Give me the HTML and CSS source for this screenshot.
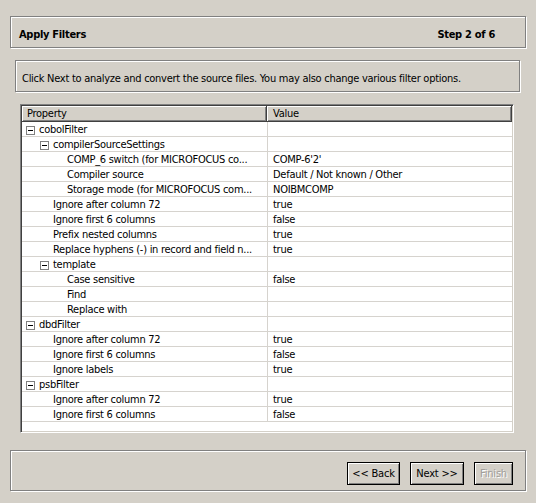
FILE: index.html
```html
<!DOCTYPE html>
<html>
<head>
<meta charset="utf-8">
<link rel="stylesheet" href="styles.css">
</head>
<body>
<div class="wizard">
  <div class="panel head-panel">
    <span class="title">Apply Filters</span>
    <span class="title">Step 2 of 6</span>
  </div>
  <div class="panel desc-panel">Click Next to analyze and convert the source files. You may also change various filter options.</div>
  <div class="grid">
    <div class="thead">
      <div class="th th-prop">Property</div>
      <div class="th th-val">Value</div>
    </div>
    <div class="tbody">
      <div class="row"><div class="prop l0"><span class="box"></span>cobolFilter</div><div class="val"></div></div>
      <div class="row"><div class="prop l1"><span class="box"></span>compilerSourceSettings</div><div class="val"></div></div>
      <div class="row"><div class="prop l2"><span class="slot"></span>COMP_6 switch (for MICROFOCUS co...</div><div class="val">COMP-6'2'</div></div>
      <div class="row"><div class="prop l2"><span class="slot"></span>Compiler source</div><div class="val">Default / Not known / Other</div></div>
      <div class="row"><div class="prop l2"><span class="slot"></span>Storage mode (for MICROFOCUS com...</div><div class="val">NOIBMCOMP</div></div>
      <div class="row"><div class="prop l1"><span class="slot"></span>Ignore after column 72</div><div class="val">true</div></div>
      <div class="row"><div class="prop l1"><span class="slot"></span>Ignore first 6 columns</div><div class="val">false</div></div>
      <div class="row"><div class="prop l1"><span class="slot"></span>Prefix nested columns</div><div class="val">true</div></div>
      <div class="row"><div class="prop l1"><span class="slot"></span>Replace hyphens (-) in record and field n...</div><div class="val">true</div></div>
      <div class="row"><div class="prop l1"><span class="box"></span>template</div><div class="val"></div></div>
      <div class="row"><div class="prop l2"><span class="slot"></span>Case sensitive</div><div class="val">false</div></div>
      <div class="row"><div class="prop l2"><span class="slot"></span>Find</div><div class="val"></div></div>
      <div class="row"><div class="prop l2"><span class="slot"></span>Replace with</div><div class="val"></div></div>
      <div class="row"><div class="prop l0"><span class="box"></span>dbdFilter</div><div class="val"></div></div>
      <div class="row"><div class="prop l1"><span class="slot"></span>Ignore after column 72</div><div class="val">true</div></div>
      <div class="row"><div class="prop l1"><span class="slot"></span>Ignore first 6 columns</div><div class="val">false</div></div>
      <div class="row"><div class="prop l1"><span class="slot"></span>Ignore labels</div><div class="val">true</div></div>
      <div class="row"><div class="prop l0"><span class="box"></span>psbFilter</div><div class="val"></div></div>
      <div class="row"><div class="prop l1"><span class="slot"></span>Ignore after column 72</div><div class="val">true</div></div>
      <div class="row"><div class="prop l1"><span class="slot"></span>Ignore first 6 columns</div><div class="val">false</div></div>
    </div>
  </div>
  <div class="panel foot-panel">
    <button class="btn btn-back">&lt;&lt; Back</button>
    <button class="btn btn-next">Next &gt;&gt;</button>
    <button class="btn btn-finish" disabled>Finish</button>
  </div>
</div>
</body>
</html>
```

FILE: styles.css
```css
html, body {
  margin: 0;
  padding: 0;
  background: #d4d0c8;
}
body {
  font-family: "DejaVu Sans Condensed", "DejaVu Sans", sans-serif;
  font-stretch: condensed;
  font-size: 11px;
  letter-spacing: -0.27px;
  color: #000;
  width: 536px;
  height: 503px;
  overflow: hidden;
}
.wizard {
  display: flex;
  flex-direction: column;
  align-items: flex-start;
  padding-top: 16px;
}
.panel {
  box-sizing: border-box;
  border: 1px solid #808080;
  box-shadow: 1px 1px 0 #fff, inset 1px 1px 0 #fff;
}
.head-panel {
  margin-left: 10px;
  width: 516px;
  height: 32px;
  display: flex;
  justify-content: space-between;
  padding: 11px 30px 0 8px;
  line-height: 14px;
}
.title {
  font-weight: bold;
  letter-spacing: -0.3px;
}
.desc-panel {
  margin-left: 15px;
  margin-top: 12px;
  width: 505px;
  height: 32px;
  padding: 11px 0 0 6px;
  line-height: 14px;
  white-space: nowrap;
}
.grid {
  box-sizing: border-box;
  margin-left: 20px;
  margin-top: 12px;
  width: 494px;
  height: 329px;
  background: #fff;
  border-top: 1px solid #808080;
  border-left: 1px solid #808080;
  border-right: 1px solid #fff;
  border-bottom: 1px solid #fff;
  box-shadow: inset 1px 1px 0 #404040, inset -1px -1px 0 #d4d0c8;
  padding: 1px;
}
.thead {
  display: grid;
  grid-template-columns: 245px 1fr;
  height: 16px;
}
.th {
  box-sizing: border-box;
  background: #d4d0c8;
  padding-top: 1px;
  line-height: 14px;
  border-right: 1px solid #404040;
  border-bottom: 1px solid #404040;
  box-shadow: inset 1px 1px 0 #fff, inset -1px -1px 0 #808080;
  white-space: nowrap;
  overflow: hidden;
}
.th-prop {
  padding-left: 5px;
}
.th-val {
  padding-left: 6px;
}
.row {
  display: grid;
  grid-template-columns: 245px 1fr;
  height: 15px;
  box-sizing: border-box;
  border-bottom: 1px solid #d6d3ce;
}
.prop, .val {
  box-sizing: border-box;
  height: 14px;
  padding-top: 1px;
  line-height: 13px;
  white-space: nowrap;
  overflow: hidden;
  display: flex;
  align-items: flex-start;
}
.val {
  border-left: 1px solid #d6d3ce;
  padding-left: 5px;
}
.l0 { padding-left: 4px; }
.l1 { padding-left: 18px; }
.l2 { padding-left: 32px; }
.slot {
  flex: none;
  width: 13px;
}
.box {
  flex: none;
  position: relative;
  box-sizing: border-box;
  width: 9px;
  height: 9px;
  margin-top: 3px;
  border: 1px solid #808080;
  background: #fff;
  margin-right: 4px;
}
.box::after {
  content: "";
  position: absolute;
  left: 1px;
  top: 3px;
  width: 5px;
  height: 1px;
  background: #000;
}
.foot-panel {
  margin-left: 10px;
  margin-top: 17px;
  width: 516px;
  height: 41px;
  display: flex;
  justify-content: flex-end;
  gap: 10px;
  padding: 11px 12px 0 0;
}
.btn {
  box-sizing: border-box;
  height: 23px;
  padding: 0;
  margin: 0;
  font-family: inherit;
  font-stretch: condensed;
  font-size: 11px;
  letter-spacing: -0.2px;
  color: #000;
  background: #d4d0c8;
  border: 1px solid #000;
  box-shadow: inset 1px 1px 0 #fff, inset -1px -1px 0 #808080;
  line-height: 20px;
  text-align: center;
}
.btn-back { width: 53px; }
.btn-next { width: 54px; }
.btn-finish {
  width: 39px;
  color: #a09e9a;
  text-shadow: 1px 1px 0 #fff;
}
```
